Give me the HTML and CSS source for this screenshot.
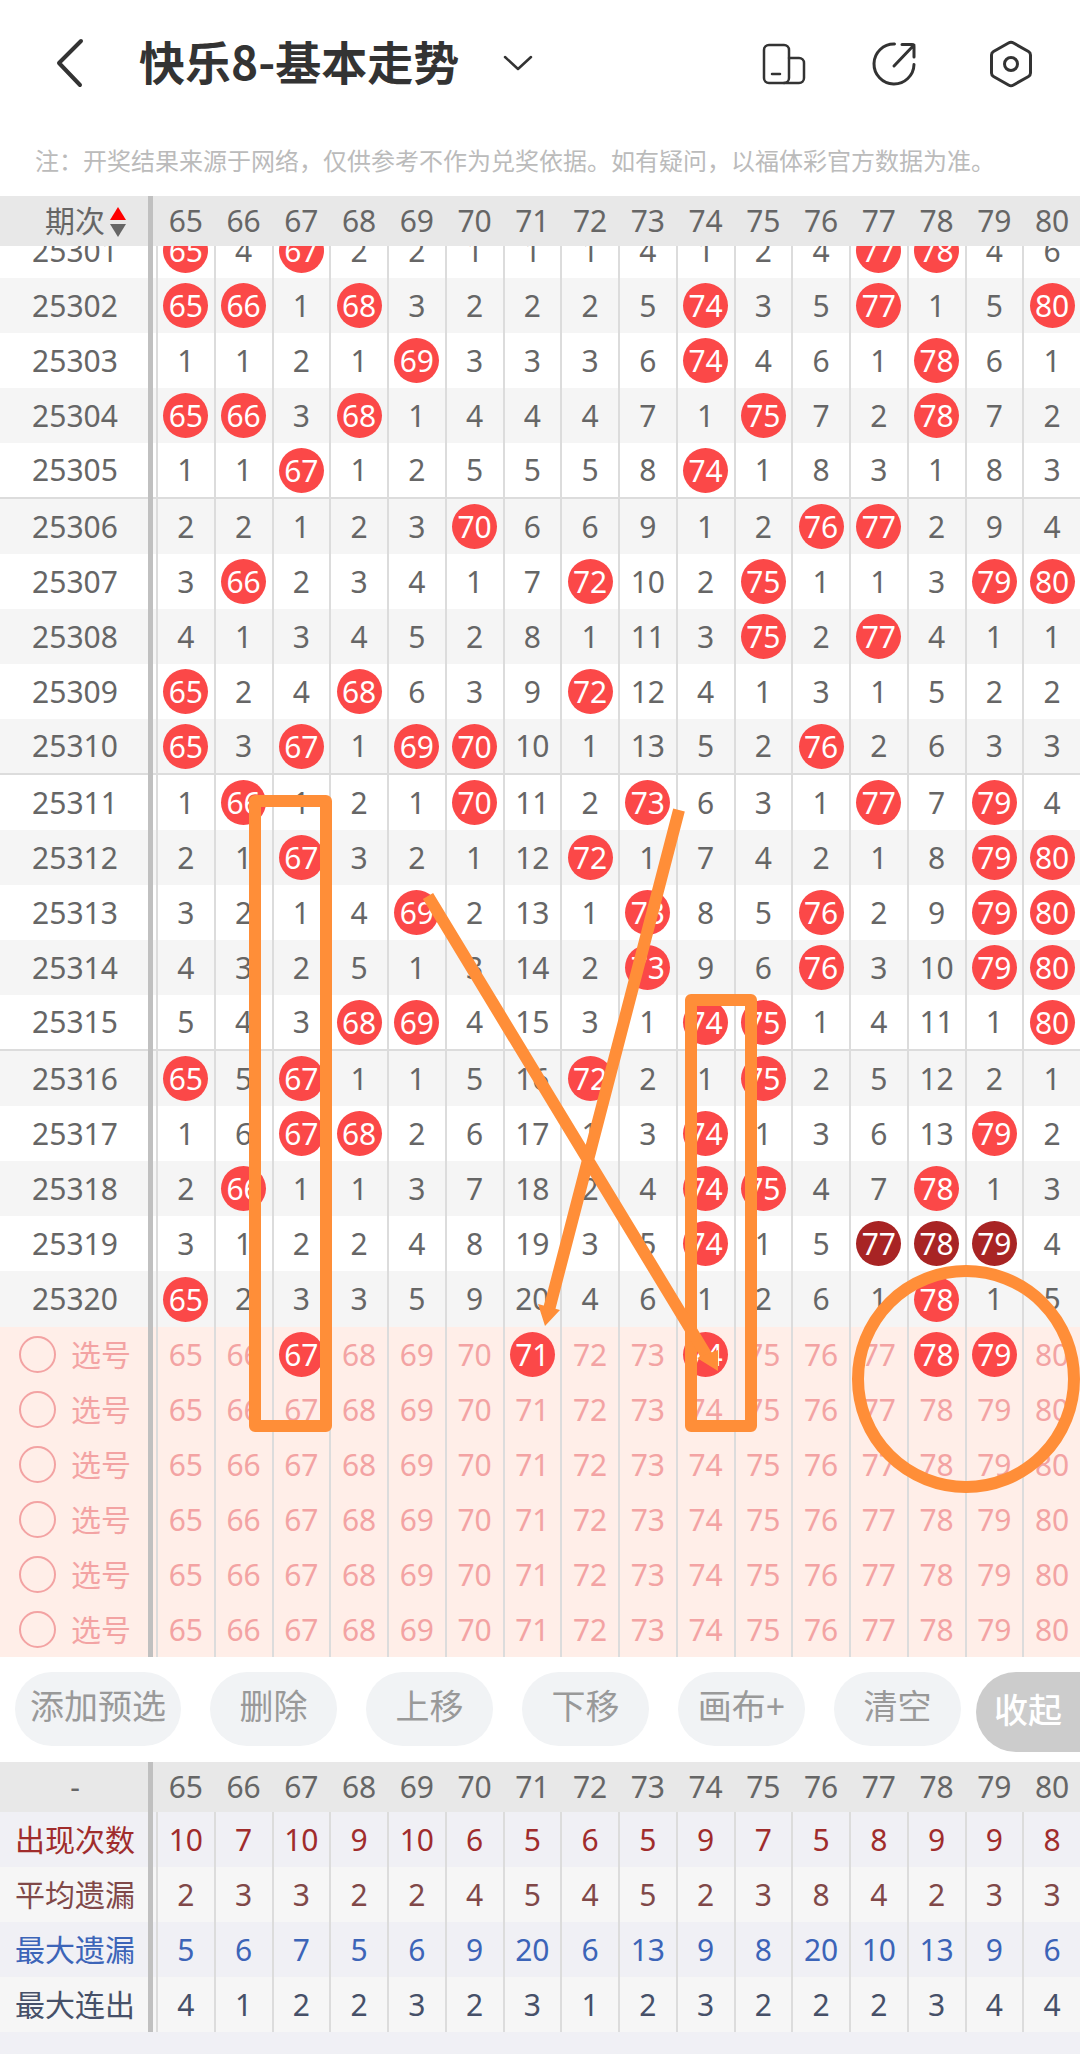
FILE: index.html
```
<!DOCTYPE html>
<html lang="zh-CN">
<head>
  <meta charset="UTF-8">
  <meta name="viewport" content="width=device-width, initial-scale=1.0">
  <title>快乐8-基本走势</title>
  <link rel="stylesheet" href="styles.css">
</head>
<body>

  <header class="topbar">
    <button class="icon-btn" aria-label="返回">
      <svg viewBox="0 0 56 56" class="icon back"><path d="M40 5L18 27L39 49"/></svg>
    </button>
    <h1 class="title">快乐8-基本走势</h1>
    <button class="icon-btn" aria-label="切换走势">
      <svg viewBox="0 0 56 56" class="icon"><path d="M15 21L28 33L41 21"/></svg>
    </button>
    <div class="actions">
      <button class="icon-btn" aria-label="横竖屏">
        <svg viewBox="0 0 56 56" class="icon">
          <rect x="7" y="9" width="25" height="38" rx="5"/>
          <path d="M32 22h10a5 5 0 0 1 5 5v15a5 5 0 0 1-5 5H27M15 38h8"/>
        </svg>
      </button>
      <button class="icon-btn" aria-label="分享">
        <svg viewBox="0 0 56 56" class="icon bold">
          <path d="M24.5 8A20 20 0 1 0 44 28.5M24 30L44 9M32 8.5h10a2 2 0 0 1 2 2V21"/>
        </svg>
      </button>
      <button class="icon-btn" aria-label="设置">
        <svg viewBox="0 0 56 56" class="icon bold">
          <path d="M25.5 7a5 5 0 0 1 5 0L45.5 15.5a4 4 0 0 1 2 3.5V37a4 4 0 0 1-2 3.5L30.5 49a5 5 0 0 1-5 0L10.5 40.5a4 4 0 0 1-2-3.5V19a4 4 0 0 1 2-3.5Z"/>
          <circle cx="28" cy="28" r="6.5"/>
        </svg>
      </button>
    </div>
  </header>

  <p class="notice">注：开奖结果来源于网络，仅供参考不作为兑奖依据。如有疑问，以福体彩官方数据为准。</p>

  <main>
    <section class="sheet">
      <table class="grid head">
        <thead>
          <tr id="chartHead">
            <th class="label"><button class="sort">期次<svg viewBox="0 0 16 30" class="sort-icon"><path class="up" d="M8 0L16 13H0Z"/><path class="down" d="M0 17H16L8 30Z"/></svg></button></th>
          </tr>
        </thead>
      </table>
      <div class="scroll">
        <table class="grid body">
          <tbody id="draws"></tbody>
          <tbody id="picks"></tbody>
        </table>
        <!-- 画布 -->
        <svg class="canvas" viewBox="0 0 1080 1411">
          <rect x="255" y="555" width="71" height="625"/>
          <rect x="691" y="754" width="60" height="426"/>
          <circle cx="966" cy="1133" r="108"/>
          <path d="M679 564L549 1064M428 650L708 1112"/>
          <path class="tip" d="M545 1080L538 1058L560 1064ZM718 1125L697 1112L718 1104Z"/>
        </svg>
      </div>
    </section>

    <div class="toolbar">
      <div class="tools">
        <button class="tool">添加预选</button>
        <button class="tool">删除</button>
        <button class="tool">上移</button>
        <button class="tool">下移</button>
        <button class="tool">画布+</button>
        <button class="tool">清空</button>
      </div>
      <button class="fold">收起</button>
    </div>

    <section class="sheet">
      <table class="grid head">
        <thead>
          <tr id="statHead"><th class="label">-</th></tr>
        </thead>
      </table>
      <table class="grid stats">
        <tbody id="stats"></tbody>
      </table>
    </section>
  </main>

  <script src="script.js"></script>
</body>
</html>
```

FILE: styles.css
```
* { box-sizing: border-box; }

body {
  margin: 0;
  background: #f0f0f5;
  color: #666;
  font-family: "Noto Sans", "Noto Sans CJK SC", sans-serif;
  font-size: 30px;
  line-height: 40px;
}

button {
  padding: 0;
  border: none;
  background: none;
  color: inherit;
  font: inherit;
  cursor: pointer;
}

/* 顶部 */
.topbar {
  display: flex;
  align-items: center;
  height: 128px;
  padding: 0 41px;
  background: #fff;
}

.title {
  margin: 0 31px 0 42px;
  padding-bottom: 8px;
  color: #333;
  font-family: "Noto Sans CJK SC", sans-serif;
  font-size: 46px;
  font-weight: bold;
  white-space: nowrap;
}

.actions {
  display: flex;
  gap: 57px;
  margin-left: auto;
}

.icon-btn {
  width: 56px;
  height: 56px;
}

.icon {
  display: block;
  width: 56px;
  height: 56px;
  fill: none;
  stroke: #333;
  stroke-width: 2.5;
  stroke-linecap: round;
  stroke-linejoin: round;
}

.icon.bold { stroke-width: 3; }
.icon.back { stroke-width: 4; }

.notice {
  margin: 0;
  padding: 12px 35px 16px;
  background: #fff;
  color: #bbb;
  font-family: "Noto Sans CJK SC", sans-serif;
  font-size: 24px;
}

/* 走势表 */
.sheet {
  position: relative;
}

.sheet::after {
  content: "";
  position: absolute;
  top: 0;
  bottom: 0;
  left: 148px;
  width: 5px;
  background: #c0c0c0;
}

.grid {
  width: 100%;
  table-layout: fixed;
  border-collapse: separate;
  border-spacing: 0;
}

.grid th,
.grid td {
  height: 55px;
  padding: 0;
  border-left: 2px solid #dcdcdc;
  font-weight: normal;
  text-align: center;
}

.grid .label {
  width: 156px;
  padding-right: 6px;
  border-left: none;
  white-space: nowrap;
}

.head { background: #e8e8e8; }

.grid.head th {
  height: 50px;
  border-left-color: transparent;
}

.sort { position: relative; }

.sort-icon {
  position: absolute;
  top: 6px;
  left: 100%;
  width: 16px;
  height: 30px;
  margin-left: 5px;
}

.sort-icon .up { fill: #f00; }
.sort-icon .down { fill: #666; }

.scroll {
  position: relative;
  overflow: hidden;
}

/* 第一行滚到表头下面 */
.body { margin-top: -23px; }

.body tr { background: #fff; }
.body tr:nth-child(even) { background: #f5f5f5; }

#draws tr:nth-child(5n) td {
  height: 56px;
}

#draws tr:nth-child(5n):not(:last-child) td {
  border-bottom: 2px solid #dcdcdc;
}

.ball {
  display: block;
  width: 45px;
  height: 45px;
  margin: 0 auto;
  border-radius: 50%;
  background: #fb4848;
  color: #fff;
  line-height: 45px;
}

.ball.run { background: #a82424; }

#picks tr {
  background: #ffeee8;
  color: #f3a3a3;
}

.pick {
  display: block;
  width: 100%;
  height: 45px;
  line-height: 45px;
}

.pick.ball { width: 45px; }

.choose {
  display: flex;
  align-items: center;
  justify-content: center;
  gap: 15px;
}

.choose input {
  appearance: none;
  width: 37px;
  height: 37px;
  margin: 0;
  border: 2px solid #f3a3a3;
  border-radius: 50%;
}

.canvas {
  position: absolute;
  top: 0;
  left: 0;
  width: 100%;
  height: 100%;
  fill: none;
  stroke: #ff8e38;
  stroke-width: 12;
  stroke-linejoin: round;
  pointer-events: none;
}

.canvas .tip {
  fill: #ff8e38;
  stroke: none;
}

/* 操作按钮 */
.toolbar {
  display: flex;
  align-items: flex-start;
  justify-content: space-between;
  height: 105px;
  padding: 15px 0 0 15px;
  background: #fff;
  font-size: 34px;
  white-space: nowrap;
}

.tools {
  display: flex;
  gap: 29px;
}

.tool {
  flex: none;
  min-width: 127px;
  height: 74px;
  padding: 0 15px 6px;
  border-radius: 37px;
  background: #f1f3f5;
  color: #999;
}

.fold {
  flex: none;
  width: 104px;
  height: 80px;
  padding: 0 18px 4px;
  border-radius: 40px 0 0 40px;
  background: #ccc;
  color: #fff;
  font-weight: 500;
}

/* 统计 */
.stats tr { background: #f6f6f6; }
.stats tr:nth-child(odd) { background: #f0f0f5; }

.stats .count { color: #a02c2c; }
.stats .avg { color: #804848; }
.stats .max { color: #3c64b8; }
.stats .streak { color: #465068; }
```

FILE: script.js
```
const FIRST = 65;
const LAST = 80;

// 每期一行，值等于列号表示开出，否则为遗漏值
const draws = {
  25301: [65, 4, 67, 2, 2, 1, 1, 1, 4, 1, 2, 4, 77, 78, 4, 6],
  25302: [65, 66, 1, 68, 3, 2, 2, 2, 5, 74, 3, 5, 77, 1, 5, 80],
  25303: [1, 1, 2, 1, 69, 3, 3, 3, 6, 74, 4, 6, 1, 78, 6, 1],
  25304: [65, 66, 3, 68, 1, 4, 4, 4, 7, 1, 75, 7, 2, 78, 7, 2],
  25305: [1, 1, 67, 1, 2, 5, 5, 5, 8, 74, 1, 8, 3, 1, 8, 3],
  25306: [2, 2, 1, 2, 3, 70, 6, 6, 9, 1, 2, 76, 77, 2, 9, 4],
  25307: [3, 66, 2, 3, 4, 1, 7, 72, 10, 2, 75, 1, 1, 3, 79, 80],
  25308: [4, 1, 3, 4, 5, 2, 8, 1, 11, 3, 75, 2, 77, 4, 1, 1],
  25309: [65, 2, 4, 68, 6, 3, 9, 72, 12, 4, 1, 3, 1, 5, 2, 2],
  25310: [65, 3, 67, 1, 69, 70, 10, 1, 13, 5, 2, 76, 2, 6, 3, 3],
  25311: [1, 66, 1, 2, 1, 70, 11, 2, 73, 6, 3, 1, 77, 7, 79, 4],
  25312: [2, 1, 67, 3, 2, 1, 12, 72, 1, 7, 4, 2, 1, 8, 79, 80],
  25313: [3, 2, 1, 4, 69, 2, 13, 1, 73, 8, 5, 76, 2, 9, 79, 80],
  25314: [4, 3, 2, 5, 1, 3, 14, 2, 73, 9, 6, 76, 3, 10, 79, 80],
  25315: [5, 4, 3, 68, 69, 4, 15, 3, 1, 74, 75, 1, 4, 11, 1, 80],
  25316: [65, 5, 67, 1, 1, 5, 16, 72, 2, 1, 75, 2, 5, 12, 2, 1],
  25317: [1, 6, 67, 68, 2, 6, 17, 1, 3, 74, 1, 3, 6, 13, 79, 2],
  25318: [2, 66, 1, 1, 3, 7, 18, 2, 4, 74, 75, 4, 7, 78, 1, 3],
  25319: [3, 1, 2, 2, 4, 8, 19, 3, 5, 74, 1, 5, 77, 78, 79, 4],
  25320: [65, 2, 3, 3, 5, 9, 20, 4, 6, 1, 2, 6, 1, 78, 1, 5]
};

const picks = [[67, 71, 74, 78, 79], [], [], [], [], []];

const stats = [
  { cls: "count", name: "出现次数", values: [10, 7, 10, 9, 10, 6, 5, 6, 5, 9, 7, 5, 8, 9, 9, 8] },
  { cls: "avg", name: "平均遗漏", values: [2, 3, 3, 2, 2, 4, 5, 4, 5, 2, 3, 8, 4, 2, 3, 3] },
  { cls: "max", name: "最大遗漏", values: [5, 6, 7, 5, 6, 9, 20, 6, 13, 9, 8, 20, 10, 13, 9, 6] },
  { cls: "streak", name: "最大连出", values: [4, 1, 2, 2, 3, 2, 3, 1, 2, 3, 2, 2, 2, 3, 4, 4] }
];

const numbers = [];
for (let n = FIRST; n <= LAST; n++) numbers.push(n);

const hit = (row, i) => row[i] === FIRST + i;

// 三连号用深色
function inRun(row, i) {
  let from = i;
  let to = i;
  while (hit(row, from - 1)) from--;
  while (hit(row, to + 1)) to++;
  return to - from >= 2;
}

["chartHead", "statHead"].forEach(id => {
  document.getElementById(id).insertAdjacentHTML("beforeend", numbers.map(n => `<th>${n}</th>`).join(""));
});

document.getElementById("draws").innerHTML = Object.entries(draws).map(([period, row]) => {
  const cells = row.map((v, i) => hit(row, i)
    ? `<td><span class="ball${inRun(row, i) ? " run" : ""}">${v}</span></td>`
    : `<td>${v}</td>`).join("");
  return `<tr><td class="label">${period}</td>${cells}</tr>`;
}).join("");

document.getElementById("picks").innerHTML = picks.map(chosen => {
  const cells = numbers.map(n => {
    const on = chosen.includes(n);
    return `<td><button class="pick${on ? " ball" : ""}" aria-pressed="${on}">${n}</button></td>`;
  }).join("");
  return `<tr><td class="label"><label class="choose"><input type="radio" name="row">选号</label></td>${cells}</tr>`;
}).join("");

document.getElementById("stats").innerHTML = stats.map(s =>
  `<tr class="${s.cls}"><td class="label">${s.name}</td>${s.values.map(v => `<td>${v}</td>`).join("")}</tr>`
).join("");

document.getElementById("picks").addEventListener("click", e => {
  if (!e.target.classList.contains("pick")) return;
  const on = e.target.classList.toggle("ball");
  e.target.setAttribute("aria-pressed", on);
});
```
